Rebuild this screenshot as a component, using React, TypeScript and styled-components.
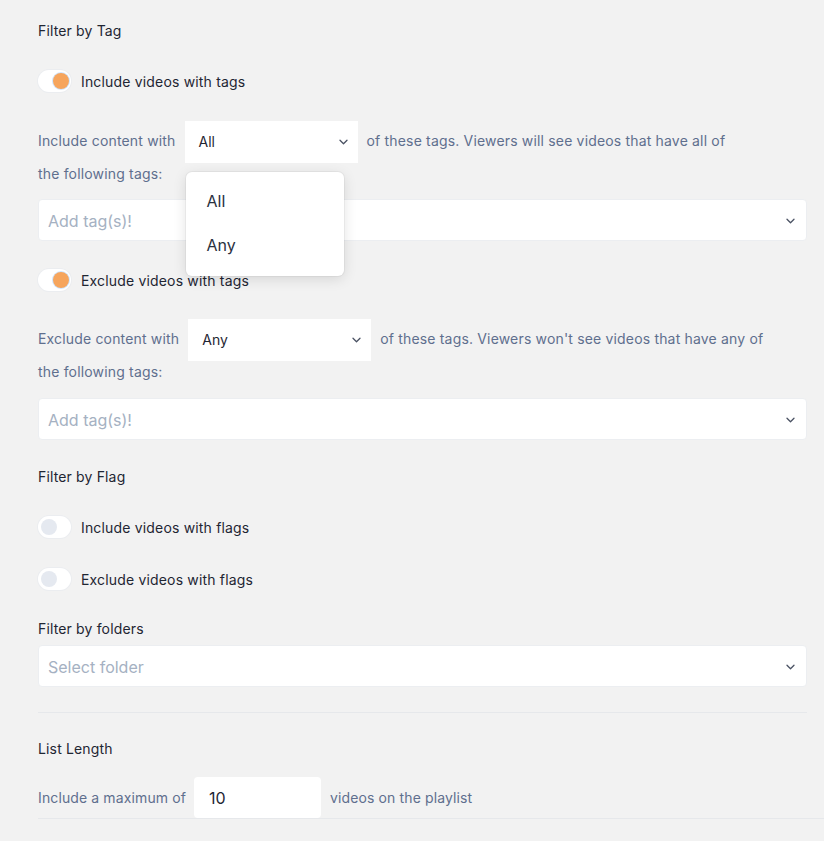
import * as React from 'react'
import styled, { createGlobalStyle } from 'styled-components'

const GlobalStyle = createGlobalStyle`
  html, body {
    margin: 0;
    padding: 0;
    background: #f2f2f2;
  }
  body {
    font-family: Inter, 'Noto Sans', sans-serif;
    -webkit-font-smoothing: antialiased;
  }
`

const Page = styled.div`
  padding: 21px 17px 0 38px;
  display: flex;
  flex-direction: column;
`

const Heading = styled.div<{ $top?: number }>`
  margin-top: ${(p) => p.$top ?? 0}px;
  font-size: 14px;
  line-height: 20px;
  letter-spacing: 0.15px;
  color: #1f2633;
`

const ToggleRow = styled.label<{ $top: number }>`
  margin-top: ${(p) => p.$top}px;
  display: flex;
  align-items: center;
  gap: 10px;
  height: 24px;
  font-size: 14px;
  letter-spacing: 0.17px;
  color: #1f2633;
`

const Track = styled.span`
  position: relative;
  width: 33px;
  height: 22px;
  border-radius: 11px;
  background: #fff;
  box-shadow: 0 0 0 1px #ebedf0;
  flex: none;
`

const Thumb = styled.span<{ $on: boolean }>`
  position: absolute;
  top: 3px;
  left: ${(p) => (p.$on ? 15 : 3)}px;
  width: 16px;
  height: 16px;
  border-radius: 50%;
  background: ${(p) => (p.$on ? '#f6a55d' : '#e5e9f0')};
  box-shadow: ${(p) => (p.$on ? '0 0 0 1px rgba(147, 197, 253, 0.45)' : 'none')};
`

const Sentence = styled.div<{ $top: number }>`
  margin-top: ${(p) => p.$top}px;
  font-size: 14px;
  line-height: 22px;
  letter-spacing: 0.17px;
  color: #5f6f8e;
`

const SelectWrap = styled.span<{ $width: number }>`
  position: relative;
  display: inline-flex;
  align-items: center;
  justify-content: space-between;
  vertical-align: middle;
  box-sizing: border-box;
  width: ${(p) => p.$width}px;
  height: 42px;
  margin: 0 9px 0 9px;
  padding: 0 10px 0 14px;
  background: #fff;
  color: #1f2633;
  font-size: 14px;
  letter-spacing: 0;
`

const Menu = styled.div`
  position: absolute;
  z-index: 5;
  top: 51px;
  left: 1px;
  width: 158px;
  padding: 7px 0 9px;
  box-sizing: border-box;
  background: #fff;
  border-radius: 6px;
  box-shadow: 0 3px 14px rgba(0, 0, 0, 0.12), 0 0 0 1px rgba(0, 0, 0, 0.04);
`

const MenuItem = styled.div`
  height: 44px;
  display: flex;
  align-items: center;
  padding-left: 21px;
  font-size: 16px;
  color: #2a3140;
`

const Field = styled.div<{ $top: number }>`
  margin-top: ${(p) => p.$top}px;
  height: 42px;
  box-sizing: border-box;
  display: flex;
  align-items: center;
  justify-content: space-between;
  padding: 1px 11px 0 9px;
  background: #fff;
  border: 1px solid #eceef1;
  border-radius: 4px;
`

const Placeholder = styled.span`
  font-size: 16px;
  color: #a5b1c2;
`

const Divider = styled.hr<{ $top: number; $bleed?: boolean }>`
  margin: ${(p) => p.$top}px ${(p) => (p.$bleed ? -17 : 0)}px 0 0;
  border: none;
  border-top: 1px solid #e6e8eb;
`

const LengthRow = styled.div<{ $top: number }>`
  margin-top: ${(p) => p.$top}px;
  display: flex;
  align-items: center;
  gap: 8px;
  font-size: 14px;
  letter-spacing: 0.12px;
  color: #5f6f8e;
`

const NumberBox = styled.div`
  width: 127px;
  height: 41px;
  box-sizing: border-box;
  display: flex;
  align-items: center;
  padding-left: 15px;
  margin-right: 1px;
  background: #fff;
  border-radius: 4px;
  font-size: 16px;
  letter-spacing: 0;
  color: #1f2633;
`

function Chevron() {
  return (
    <svg width="9" height="6" viewBox="0 0 9 6" fill="none">
      <path d="M1 1.2l3.5 3.5L8 1.2" stroke="#4a5263" strokeWidth="1.3" strokeLinecap="round" strokeLinejoin="round" />
    </svg>
  )
}

function Toggle({ on, label, top }: { on: boolean; label: string; top: number }) {
  return (
    <ToggleRow $top={top}>
      <Track>
        <Thumb $on={on} />
      </Track>
      {label}
    </ToggleRow>
  )
}

function InlineSelect({ value, width, open }: { value: string; width: number; open?: boolean }) {
  return (
    <SelectWrap $width={width}>
      {value}
      <Chevron />
      {open && (
        <Menu>
          <MenuItem>All</MenuItem>
          <MenuItem>Any</MenuItem>
        </Menu>
      )}
    </SelectWrap>
  )
}

export default function App(): JSX.Element {
  return (
    <>
      <GlobalStyle />
      <Page>
        <Heading>Filter by Tag</Heading>
        <Toggle on label="Include videos with tags" top={28} />
        <Sentence $top={28}>
          Include content with
          <InlineSelect value="All" width={173} open />
          of these tags. Viewers will see videos that have all of
          <br />
          the following tags:
        </Sentence>
        <Field $top={14}>
          <Placeholder>Add tag(s)!</Placeholder>
          <Chevron />
        </Field>

        <Toggle on label="Exclude videos with tags" top={27} />
        <Sentence $top={27}>
          Exclude content with
          <InlineSelect value="Any" width={183} />
          of these tags. Viewers won't see videos that have any of
          <br />
          the following tags:
        </Sentence>
        <Field $top={15}>
          <Placeholder>Add tag(s)!</Placeholder>
          <Chevron />
        </Field>

        <Heading $top={27}>Filter by Flag</Heading>
        <Toggle on={false} label="Include videos with flags" top={28} />
        <Toggle on={false} label="Exclude videos with flags" top={28} />

        <Heading $top={28}>Filter by folders</Heading>
        <Field $top={6}>
          <Placeholder>Select folder</Placeholder>
          <Chevron />
        </Field>

        <Divider $top={25} />

        <Heading $top={26}>List Length</Heading>
        <LengthRow $top={18}>
          Include a maximum of
          <NumberBox>10</NumberBox>
          videos on the playlist
        </LengthRow>
        <Divider $top={0} $bleed />
      </Page>
    </>
  )
}
